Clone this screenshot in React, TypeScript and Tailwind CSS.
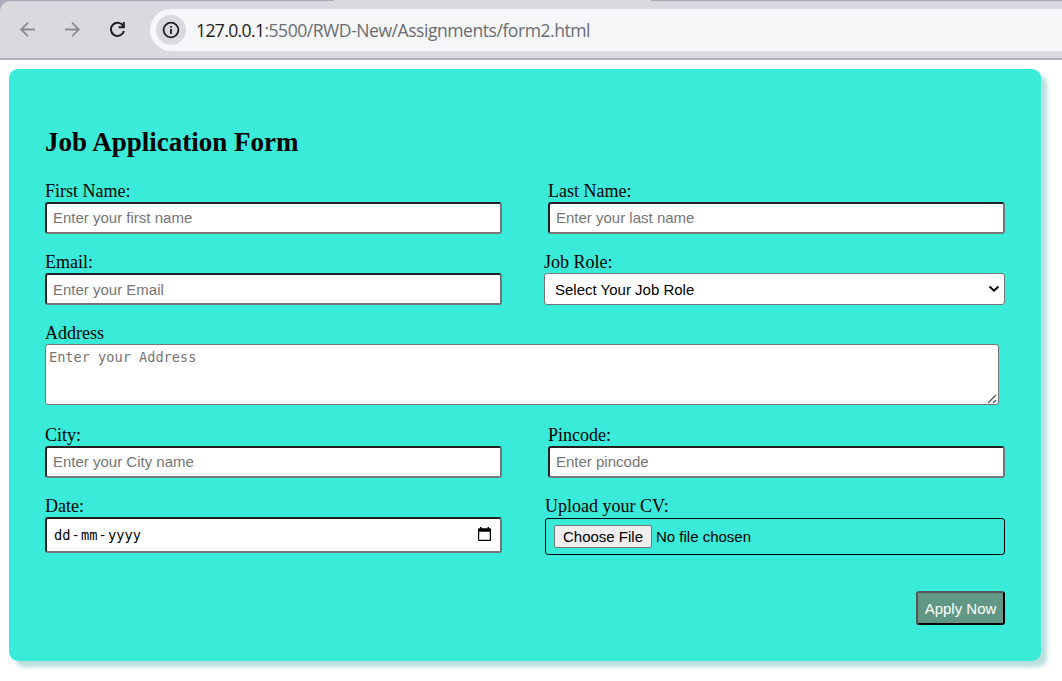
import type { ReactNode } from "react";

const inset =
  "block w-full rounded-[3px] border-2 border-t-[#212121] border-l-[#212121] border-r-[#767676] border-b-[#767676] bg-white outline-none";
const sans = "font-['Liberation_Sans',Arial,sans-serif] text-[15px]";

function Field({ label, className, children }: { label: string; className: string; children: ReactNode }) {
  return (
    <div className={className}>
      <div className="h-[21px] text-[18px] leading-[21px] whitespace-nowrap">{label}</div>
      {children}
    </div>
  );
}

function TextInput({ placeholder, className = "pb-0.5" }: { placeholder: string; className?: string }) {
  return (
    <input
      type="text"
      placeholder={placeholder}
      className={`${inset} ${sans} h-8 px-1.5 pt-0 placeholder:text-[#757575] ${className}`}
    />
  );
}

function BrowserBar() {
  return (
    <header className="flex h-[60px] flex-col">
      <div className="flex h-px shrink-0 bg-[#d9dae0]">
        <div className="w-[334px] bg-[#a9abbb]" />
        <div className="w-[317px]" />
        <div className="grow bg-[#a9abbb]" />
      </div>
      <div className="bg-[#a9abbb]">
        <div className="flex h-[57px] items-center rounded-tl-[10px] bg-[#d9dae0] pt-px">
          <svg className="ml-[18px] shrink-0" width="20" height="20" viewBox="0 0 20 20" fill="none" stroke="#8a8b90" strokeWidth="1.8">
            <path d="M17 9.5H3.5M10 2.7L3.2 9.5L10 16.3" />
          </svg>
          <svg className="ml-[24px] shrink-0" width="20" height="20" viewBox="0 0 20 20" fill="none" stroke="#8a8b90" strokeWidth="1.8">
            <path d="M3 9.5H16.5M10 2.7L16.8 9.5L10 16.3" />
          </svg>
          <svg className="ml-[26px] shrink-0" width="20" height="20" viewBox="0 0 20 20" fill="none" stroke="#1f2023" strokeWidth="2">
            <path d="M15.2 6A6.6 6.6 0 1 0 15.9 11M15.8 2V7.2H10.6" />
          </svg>
          <div className="ml-[22px] flex h-[42px] grow items-center rounded-l-full bg-[#f6f7f9] pl-1.5">
            <div className="flex h-[30px] w-[30px] items-center justify-center rounded-full bg-[#d9dae0]">
              <svg width="18" height="18" viewBox="0 0 18 18" fill="none" stroke="#1f2023" strokeWidth="1.8">
                <circle cx="9" cy="9" r="7.4" />
                <path d="M9 8.1V13M9 4.9V6.7" />
              </svg>
            </div>
            <span className="ml-[10px] pb-px font-['Open_Sans','Noto_Sans',sans-serif] text-[17.6px] leading-6 tracking-[-0.49px] whitespace-nowrap text-[#6b6c70]">
              <span className="tracking-[-0.65px] text-[#1f2023]">127.0.0.1</span>:5500/RWD-New/Assignments/form2.html
            </span>
          </div>
        </div>
      </div>
      <div className="h-0.5 bg-[#b0b0b7]" />
    </header>
  );
}

export default function App() {
  return (
    <div className="h-[681px] w-[1062px] overflow-hidden bg-white font-['Liberation_Serif','Times_New_Roman',serif] text-black">
      <BrowserBar />
      <main className="mt-[9px] ml-[9px] h-[592px] w-[1032px] rounded-[9px] bg-[#3aebda] pr-9 pl-9 shadow-[6px_6px_4px_#b9dfdf]">
        <h1 className="pt-[57px] text-[27px] leading-[32px] font-bold">Job Application Form</h1>
        <form className="mt-[23px] flex flex-col">
          <div className="flex justify-between">
            <Field label="First Name:" className="w-[457px]">
              <TextInput placeholder="Enter your first name" />
            </Field>
            <Field label="Last Name:" className="w-[457px]">
              <TextInput placeholder="Enter your last name" />
            </Field>
          </div>
          <div className="mt-[18px] flex justify-between">
            <Field label="Email:" className="w-[457px]">
              <TextInput placeholder="Enter your Email" className="pb-0" />
            </Field>
            <Field label="Job Role:" className="w-[461px]">
              <div className={`${sans} flex h-8 items-center justify-between rounded-[3px] border border-[#767676] bg-white pr-1 pl-2.5`}>
                <span className="pt-0.5">Select Your Job Role</span>
                <svg width="12" height="8" viewBox="0 0 12 8" fill="none" stroke="black" strokeWidth="2">
                  <path d="M1.5 1.5L6 5.7L10.5 1.5" />
                </svg>
              </div>
            </Field>
          </div>
          <Field label="Address" className="mt-[18px] w-[954px]">
            <div className="relative">
              <textarea
                placeholder="Enter your Address"
                className="block h-[61px] w-full resize-none rounded-[3px] border border-[#767676] bg-white px-[3px] py-[3px] font-['DejaVu_Sans_Mono',monospace] text-[13.6px] leading-[18px] outline-none placeholder:text-[#757575]"
              />
              <svg className="absolute right-[2px] bottom-[1px]" width="10" height="10" viewBox="0 0 10 10" stroke="#555555" strokeWidth="1.3">
                <path d="M1 9L9 1M6 9L9 6" />
              </svg>
            </div>
          </Field>
          <div className="mt-5 flex justify-between">
            <Field label="City:" className="w-[457px]">
              <TextInput placeholder="Enter your City name" />
            </Field>
            <Field label="Pincode:" className="w-[457px]">
              <TextInput placeholder="Enter pincode" />
            </Field>
          </div>
          <div className="mt-[18px] flex justify-between">
            <Field label="Date:" className="w-[457px]">
              <div className={`${inset} h-9`}>
                <div className="flex h-full items-center justify-between pr-[9px] pl-[7px] font-['DejaVu_Sans_Mono',monospace] text-[13.7px]">
                  <span className="flex">
                    <span>dd</span>
                    <span className="w-[10.5px] text-center">-</span>
                    <span>mm</span>
                    <span className="w-[10.5px] text-center">-</span>
                    <span>yyyy</span>
                  </span>
                  <svg className="mb-0.5" width="13" height="14" viewBox="0 0 13 14">
                    <path fill="black" fillRule="evenodd" d="M1 1.3H2V0H3.5V1.3H9.5V0H11V1.3H12Q13 1.3 13 2.3V13Q13 14 12 14H1Q0 14 0 13V2.3Q0 1.3 1 1.3ZM1.2 4.8V12.8H11.8V4.8Z" />
                  </svg>
                </div>
              </div>
            </Field>
            <Field label="Upload your CV:" className="w-[460px]">
              <div className={`${sans} mt-px flex h-[37px] items-center rounded-[3px] border border-black pl-2`}>
                <button type="button" className="h-[23px] w-[98px] rounded-[2px] border border-[#767676] bg-[#efefef] leading-[21px] whitespace-nowrap">
                  Choose File
                </button>
                <span className="ml-1 pt-0.5">No file chosen</span>
              </div>
            </Field>
          </div>
          <button
            type="button"
            className={`${sans} mt-9 h-[34px] w-[89px] self-end rounded-[3px] border-2 border-t-[#555555] border-l-[#555555] border-r-black border-b-black bg-[#629785] pt-px leading-[30px] whitespace-nowrap text-white`}
          >
            Apply Now
          </button>
        </form>
      </main>
    </div>
  );
}
